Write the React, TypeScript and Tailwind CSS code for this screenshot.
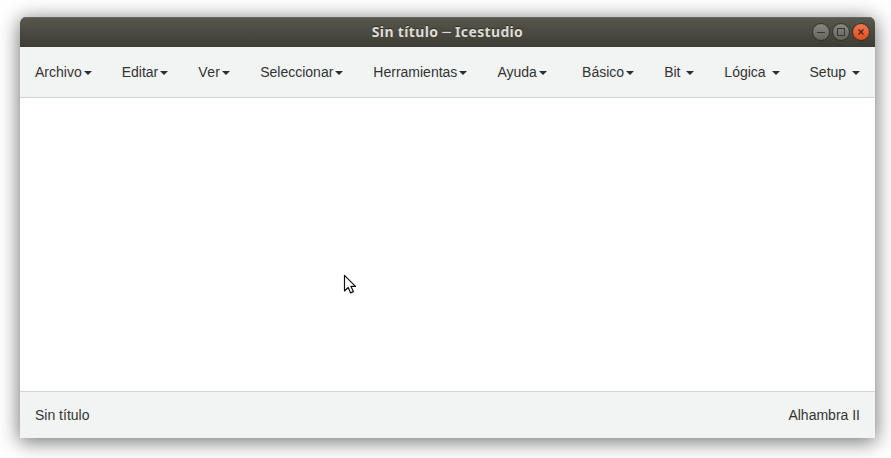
type MenuItem = { label: string; spaced?: boolean; className?: string };

const mainMenu: MenuItem[] = [
  { label: 'Archivo' },
  { label: 'Editar' },
  { label: 'Ver', className: 'tracking-[0.3px]' },
  { label: 'Seleccionar' },
  { label: 'Herramientas' },
  { label: 'Ayuda' },
];

const blockMenu: MenuItem[] = [
  { label: 'Básico' },
  { label: 'Bit', spaced: true },
  { label: 'Lógica', spaced: true },
  { label: 'Setup', spaced: true },
];

function Menu({ items }: { items: MenuItem[] }) {
  return (
    <ul className="flex">
      {items.map(({ label, spaced, className = '' }) => (
        <li key={label} className="flex items-center px-[15px]">
          <span className={`whitespace-pre ${className}`}>{spaced ? label + ' ' : label}</span>
          <span className="mt-px ml-0.5 border-x-4 border-t-4 border-x-transparent border-t-[#292d30]" />
        </li>
      ))}
    </ul>
  );
}

function WindowButton({ kind }: { kind: 'min' | 'max' | 'close' }) {
  const close = kind === 'close';
  return (
    <svg width="20" height="20" viewBox="0 0 20 20" fill="none">
      <defs>
        <linearGradient id={kind} x1="0" y1="0" x2="0" y2="1">
          <stop stopColor={close ? '#f47750' : '#8a897f'} />
          <stop offset="1" stopColor={close ? '#df4b1d' : '#64635b'} />
        </linearGradient>
      </defs>
      <circle cx="10" cy="10" r="8.5" fill={`url(#${kind})`} stroke="#33322c" />
      {kind === 'min' && <path d="M6 10.5h8" stroke="#35342f" />}
      {kind === 'max' && <path d="M6.5 6.5h7v7h-7z" stroke="#35342f" />}
      {close && <path d="m7.5 7.5 5 5m0-5-5 5" stroke="#43251b" strokeWidth="1.2" />}
    </svg>
  );
}

export default function App() {
  return (
    <div className="h-[458px] w-[891px] overflow-hidden bg-white pt-[17px] pr-4 pl-5 font-['Liberation_Sans',Arial,sans-serif] text-sm leading-5 text-[#333]">
      <div className="flex h-[421px] w-[855px] flex-col overflow-hidden rounded-t-[6px] shadow-[0_3px_20px_1px_rgba(0,0,0,0.55)]">
        <header className="grid h-[30px] shrink-0 grid-cols-[1fr_auto_1fr] items-center bg-linear-to-b from-[#58584e] to-[#3d3c36] inset-shadow-[0_1px_0_#686860]">
          <span />
          <h1 className="font-['Noto_Sans',sans-serif] text-[14px] font-bold tracking-[0.35px] text-[#dfdbd2] [text-shadow:0_-1px_0_#2b2a25]">
            Sin título <span className="font-['DejaVu_Sans',sans-serif] font-normal leading-none">─</span> Icestudio
          </h1>
          <div className="flex justify-end pr-1">
            <WindowButton kind="min" />
            <WindowButton kind="max" />
            <WindowButton kind="close" />
          </div>
        </header>
        <nav className="flex h-[51px] shrink-0 justify-between border-b border-[#d0d5d9] bg-[#f2f4f4]">
          <Menu items={mainMenu} />
          <Menu items={blockMenu} />
        </nav>
        <main className="relative grow bg-white">
          <svg className="absolute top-[175px] left-[322px]" width="18" height="24" viewBox="0 0 18 24">
            <path
              d="M2.5 2.3v15.7l3.7-3.5 2.4 5.4 2.8-1.3-2.4-5.2h4.5z"
              fill="#fff"
              stroke="#111"
              strokeWidth="1.2"
              strokeLinejoin="round"
            />
          </svg>
        </main>
        <footer className="flex h-[47px] shrink-0 items-center justify-between border-t border-[#d0d5d5] bg-[#f2f4f4] px-[15px]">
          <span>Sin título</span>
          <span>Alhambra II</span>
        </footer>
      </div>
    </div>
  );
}
